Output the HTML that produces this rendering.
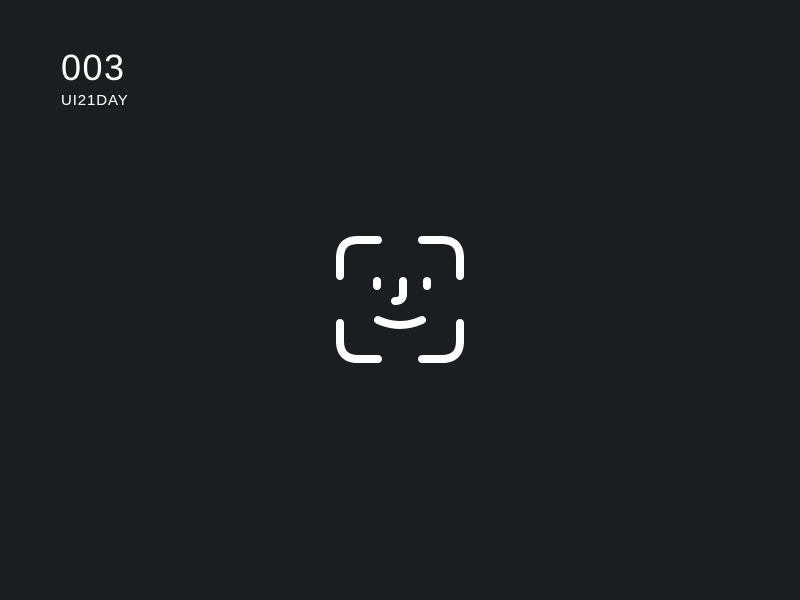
<!DOCTYPE html>
<html><head><style>
body{margin:0;width:800px;height:600px;background:#1c1d21;overflow:hidden;font-family:"Liberation Sans",sans-serif;color:#fff;position:relative}
.t1{position:absolute;left:61px;top:48px;font-size:36px;line-height:40px;font-weight:300;letter-spacing:1.5px}
.t2{position:absolute;left:61px;top:92px;font-size:15px;line-height:18px;letter-spacing:0.9px}
</style></head><body>
<div class="t1">003</div>
<div class="t2">UI21DAY</div>
<svg width="800" height="600" style="position:absolute;left:0;top:0" fill="none" stroke="#fff" stroke-width="8" stroke-linecap="round" stroke-linejoin="round">
<path d="M340 276 V258 Q340 240 358 240 H378"/>
<path d="M422 240 H442 Q460 240 460 258 V276"/>
<path d="M340 323 V341 Q340 359 358 359 H378"/>
<path d="M460 323 V341 Q460 359 442 359 H422"/>
<path d="M377 281 V286"/>
<path d="M427 281 V286"/>
<path d="M403 281 V294 Q403 301 395 301"/>
<path d="M378 320 Q400 330 422 320"/>
</svg>
</body></html>
